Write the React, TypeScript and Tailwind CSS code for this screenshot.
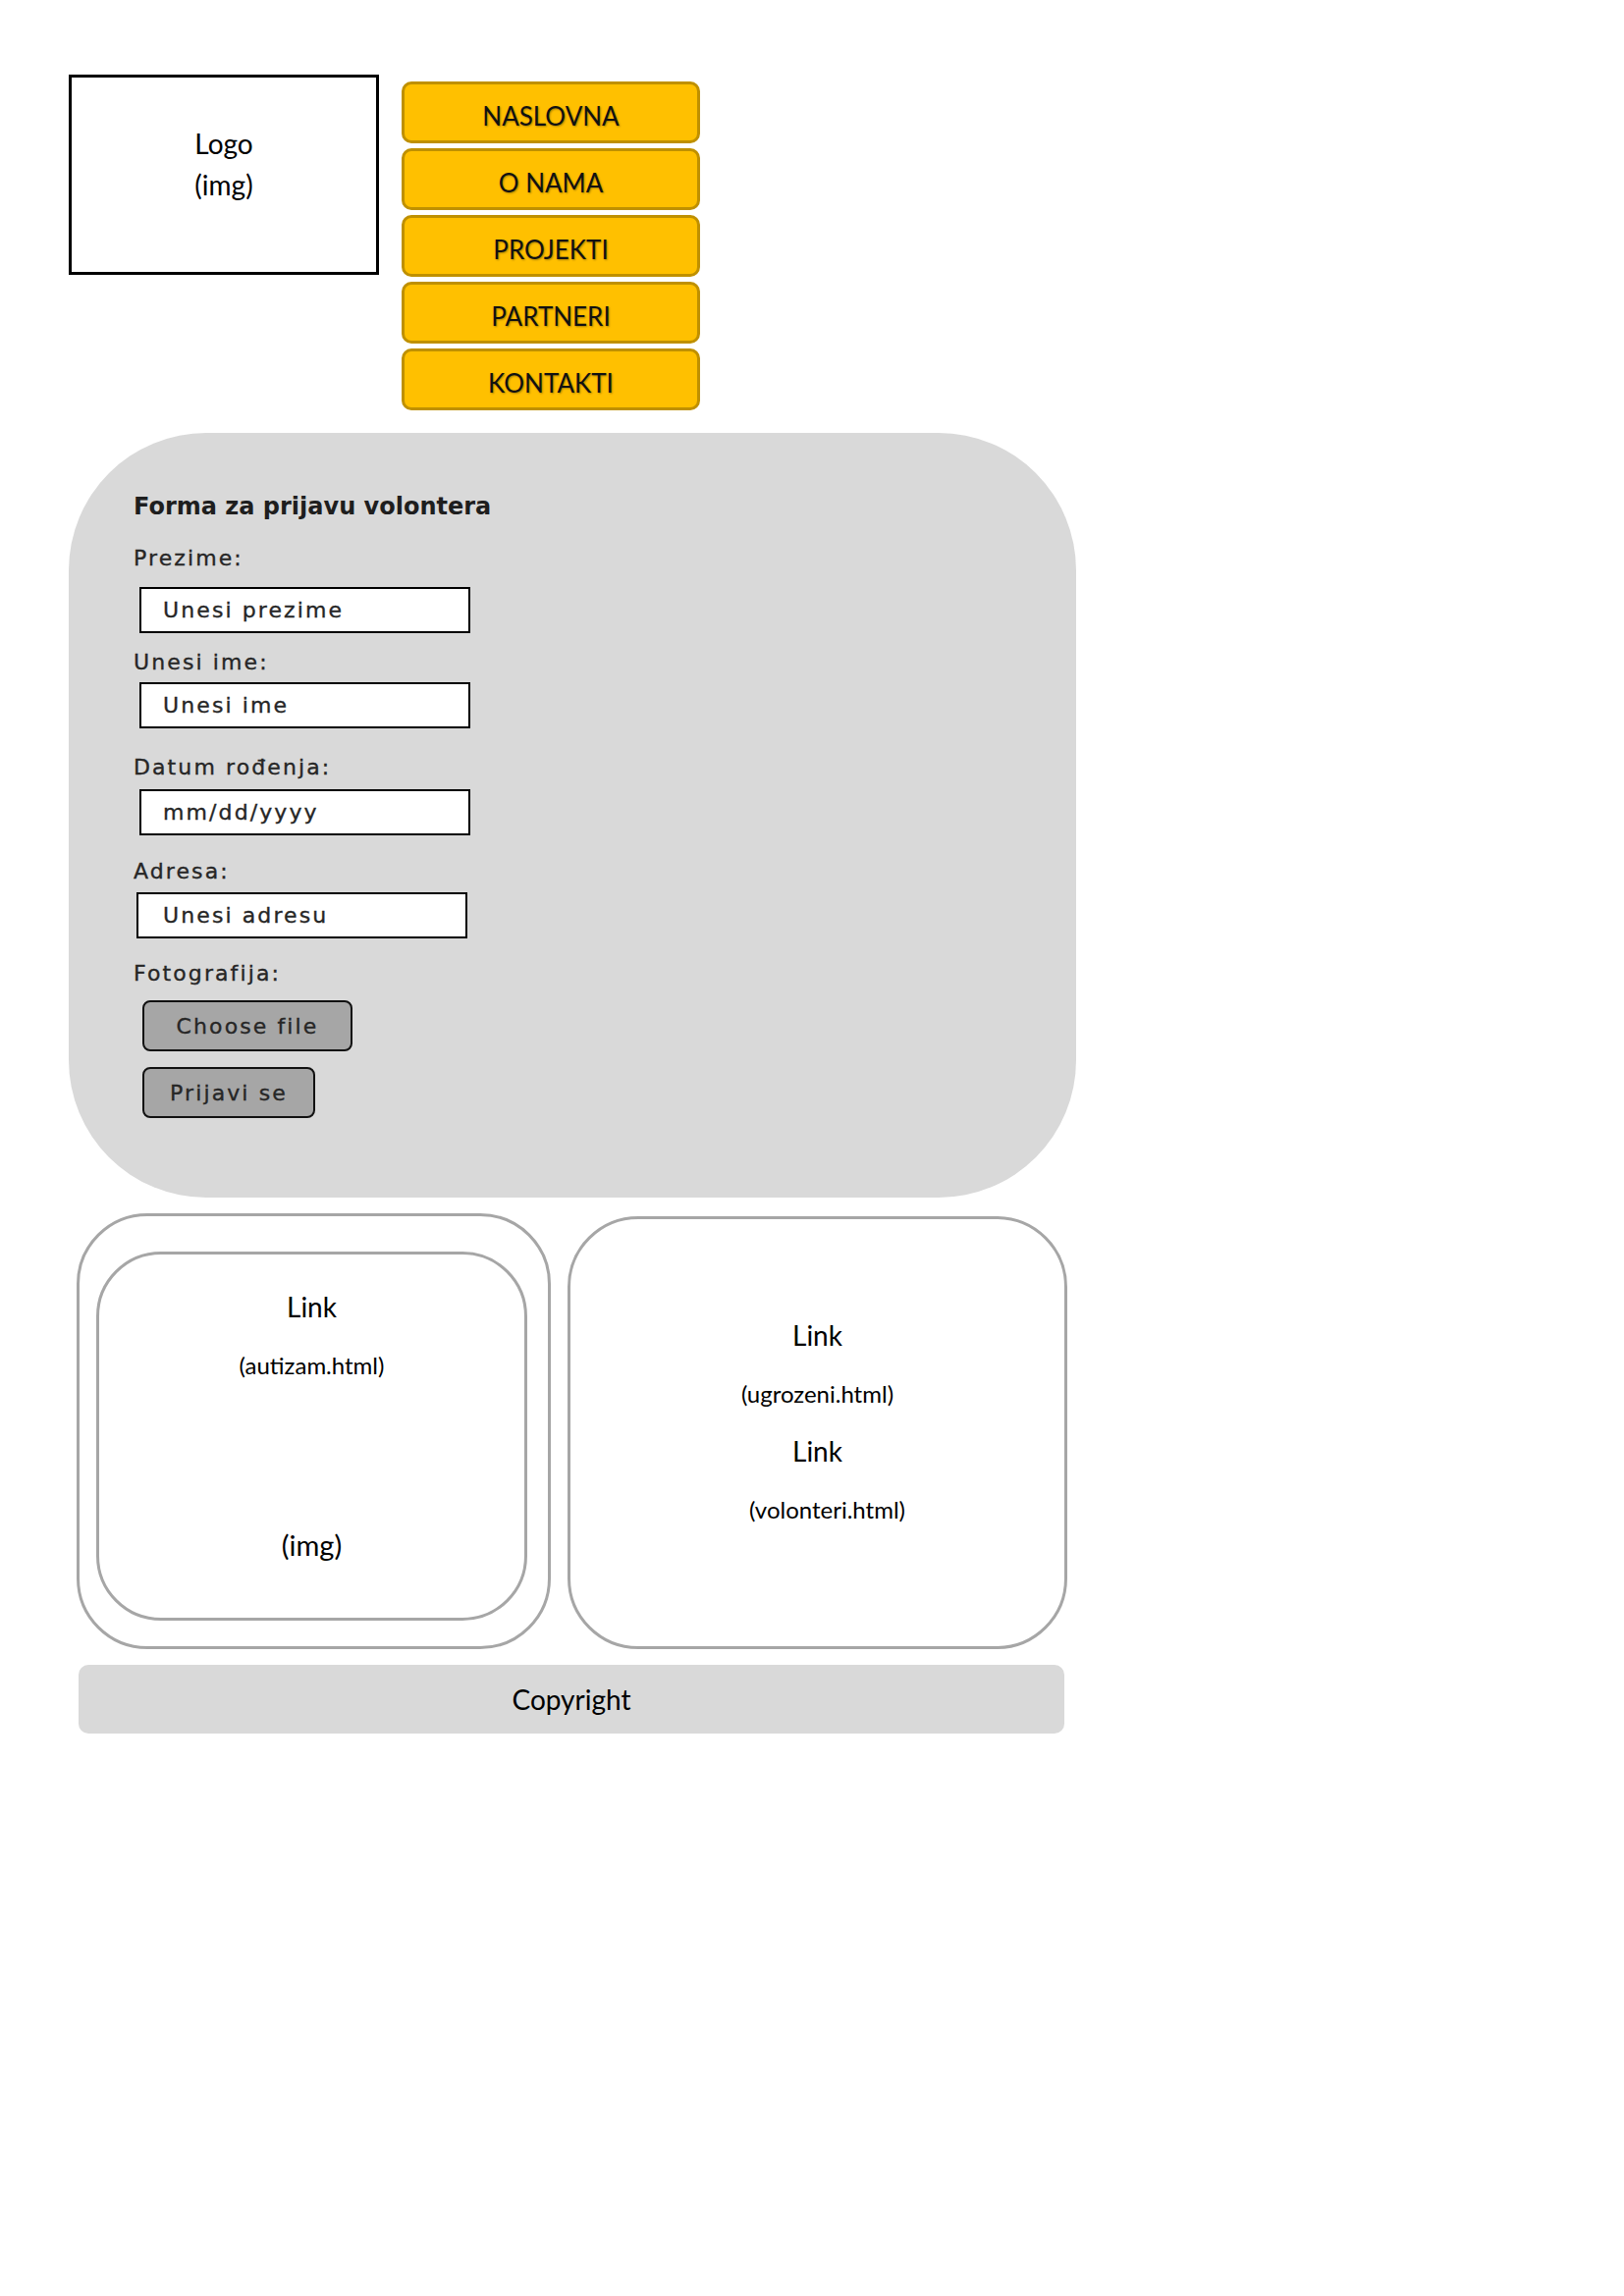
const navItems = ["NASLOVNA", "O NAMA", "PROJEKTI", "PARTNERI", "KONTAKTI"];

const sans = "font-['Lato','Open_Sans',sans-serif]";
const formFont = "font-['DejaVu_Sans','Verdana',sans-serif]";
const formText = "text-[22px] tracking-[2.1px] text-[#262626] [-webkit-text-stroke:0.35px_#262626]";

function Field({
  label,
  placeholder,
  labelClass,
  inputClass,
}: {
  label: string;
  placeholder: string;
  labelClass: string;
  inputClass: string;
}) {
  return (
    <>
      <div className={`leading-[28px] ${formText} ${labelClass}`}>{label}</div>
      <div
        className={`flex h-[47px] w-[337px] items-center border-2 border-black bg-white pl-[22px] ${formText} ${inputClass}`}
      >
        {placeholder}
      </div>
    </>
  );
}

export default function App() {
  return (
    <div className="min-h-[2339px] w-full bg-white text-black">
      <div className="w-[1200px] pl-[70px] pt-[76px]">
        <header className="flex gap-[23px]">
          <div
            className={`flex h-[204px] w-[316px] shrink-0 flex-col items-center border-[3px] border-black pt-[46px] text-[28px] leading-[42px] ${sans}`}
          >
            <span>Logo</span>
            <span>(img)</span>
          </div>
          <nav className="flex w-[304px] shrink-0 flex-col gap-[5px] pt-[7px]">
            {navItems.map((item) => (
              <a
                key={item}
                className={`flex h-[63px] items-center justify-center rounded-[10px] border-[3px] border-[#bf9000] bg-[#ffc000] pt-[7px] text-[26px] text-[#111] [text-shadow:1px_1px_2px_rgba(0,0,0,0.35)] ${sans}`}
              >
                {item}
              </a>
            ))}
          </nav>
        </header>

        <form
          className={`mt-[23px] flex h-[779px] w-[1026px] flex-col items-start rounded-[140px] bg-[#d9d9d9] pl-[66px] pt-[61px] ${formFont}`}
        >
          <h2 className="text-[24px] font-bold leading-[28px] text-[#1e1e1e]">
            Forma za prijavu volontera
          </h2>
          <Field
            label="Prezime:"
            placeholder="Unesi prezime"
            labelClass="mt-[25px]"
            inputClass="mt-[15px] ml-[6px]"
          />
          <Field
            label="Unesi ime:"
            placeholder="Unesi ime"
            labelClass="mt-[16px]"
            inputClass="mt-[6px] ml-[6px]"
          />
          <Field
            label="Datum rođenja:"
            placeholder="mm/dd/yyyy"
            labelClass="mt-[26px]"
            inputClass="mt-[8px] ml-[6px]"
          />
          <Field
            label="Adresa:"
            placeholder="Unesi adresu"
            labelClass="mt-[23px]"
            inputClass="mt-[7px] ml-[3px] pl-[25px]"
          />
          <div className={`mt-[22px] leading-[28px] ${formText}`}>Fotografija:</div>
          <button
            type="button"
            className={`ml-[9px] mt-[13px] h-[52px] w-[214px] rounded-[8px] border-2 border-[#111] bg-[#a6a6a6] ${formText}`}
          >
            Choose file
          </button>
          <button
            type="button"
            className={`ml-[9px] mt-[16px] h-[52px] w-[176px] rounded-[8px] border-2 border-[#111] bg-[#a6a6a6] ${formText}`}
          >
            Prijavi se
          </button>
        </form>

        <section className={`ml-[8px] mt-[16px] flex gap-[17px] ${sans}`}>
          <div className="flex h-[444px] w-[483px] shrink-0 flex-col rounded-[72px] border-[3px] border-[#a6a6a6] pb-[26px] pl-[17px] pr-[21px] pt-[36px]">
            <div className="flex flex-1 flex-col items-center rounded-[66px] border-[3px] border-[#a6a6a6] pt-[33px]">
              <span className="text-[28px] leading-[40px]">Link</span>
              <span className="mt-[25px] text-[24px] leading-[30px]">(autizam.html)</span>
              <span className="mt-[148px] text-[29px] leading-[40px]">(img)</span>
            </div>
          </div>
          <div className="mt-[3px] flex h-[441px] w-[509px] shrink-0 flex-col items-center rounded-[72px] border-[3px] border-[#a6a6a6] pt-[98px]">
            <span className="text-[28px] leading-[40px]">Link</span>
            <span className="mt-[25px] text-[24px] leading-[30px]">(ugrozeni.html)</span>
            <span className="mt-[23px] text-[28px] leading-[40px]">Link</span>
            <span className="ml-[20px] mt-[25px] text-[24px] leading-[30px]">(volonteri.html)</span>
          </div>
        </section>

        <footer
          className={`ml-[10px] mt-[16px] flex h-[70px] w-[1004px] items-center justify-center rounded-[10px] bg-[#d9d9d9] text-[28px] ${sans}`}
        >
          Copyright
        </footer>
      </div>
    </div>
  );
}
